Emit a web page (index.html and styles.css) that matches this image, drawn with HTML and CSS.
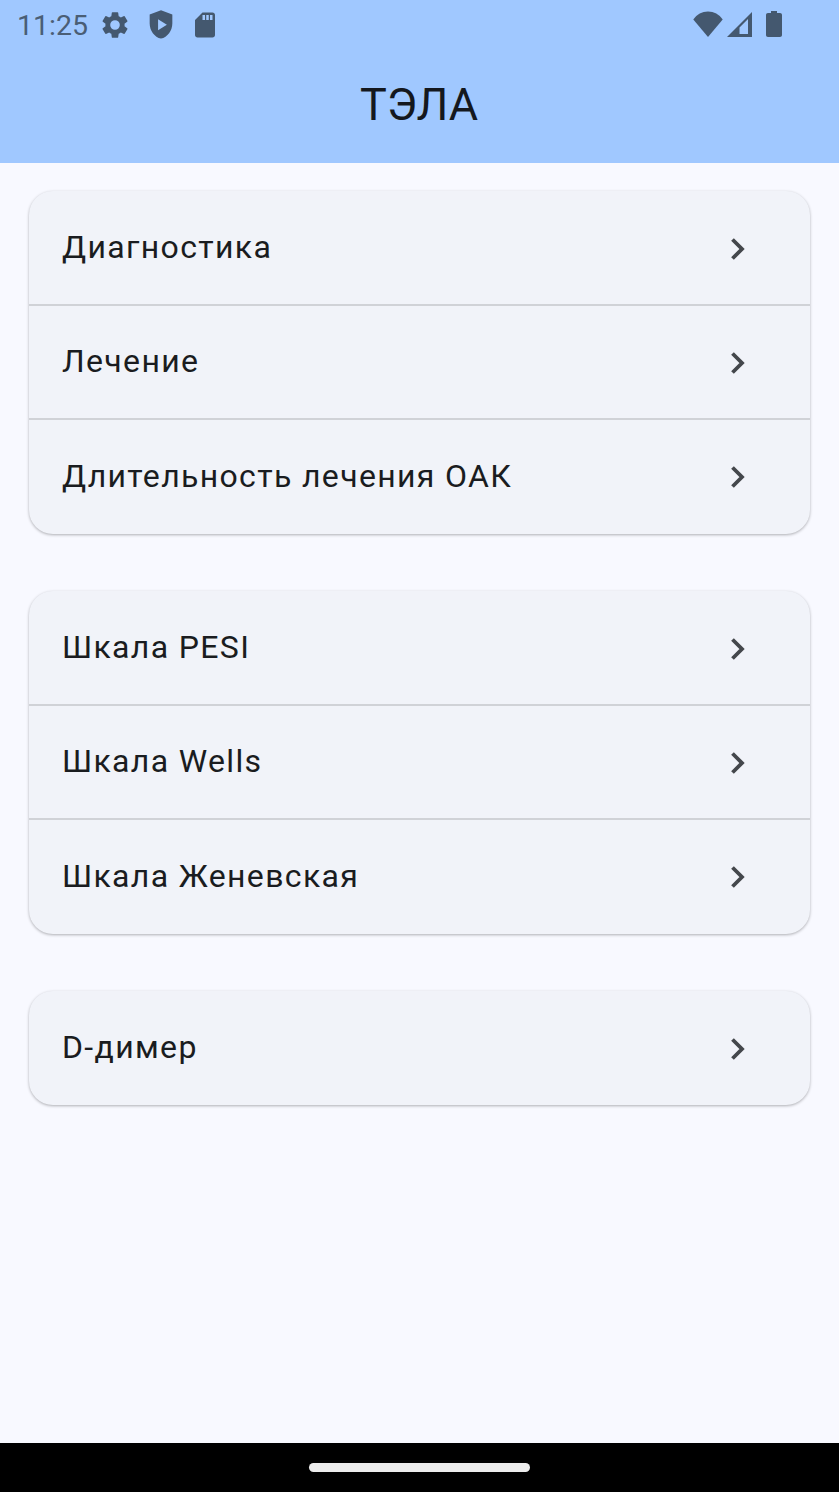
FILE: index.html
```html
<!DOCTYPE html>
<html lang="ru">
<head>
    <meta charset="UTF-8">
    <meta name="viewport" content="width=device-width, initial-scale=1.0">
    <title>ТЭЛА</title>
    <link rel="stylesheet" href="styles.css">
</head>
<body>
    <div class="app">
        <!-- Status bar and title -->
        <header class="top-bar">
            <div class="status-bar">
                <div class="status-left">
                    <span class="clock">11:25</span>
                    <svg class="gear" viewBox="0 0 24 24"><path d="M19.14 12.94c.04-.3.06-.61.06-.94s-.02-.64-.07-.94l2.03-1.58a.49.49 0 0 0 .12-.61l-1.92-3.32a.49.49 0 0 0-.59-.22l-2.39.96a7 7 0 0 0-1.62-.94l-.36-2.54a.48.48 0 0 0-.48-.41h-3.84a.48.48 0 0 0-.47.41l-.36 2.54a7.4 7.4 0 0 0-1.62.94l-2.39-.96a.48.48 0 0 0-.59.22L2.74 8.87a.48.48 0 0 0 .12.61l2.03 1.58c-.05.3-.09.63-.09.94s.02.64.07.94l-2.03 1.58a.49.49 0 0 0-.12.61l1.92 3.32c.12.22.37.29.59.22l2.39-.96c.5.38 1.03.7 1.62.94l.36 2.54c.05.24.24.41.48.41h3.84c.24 0 .44-.17.47-.41l.36-2.54a7 7 0 0 0 1.62-.94l2.39.96c.22.08.47 0 .59-.22l1.92-3.32a.48.48 0 0 0-.12-.61zM12 15.6a3.6 3.6 0 1 1 0-7.2 3.6 3.6 0 0 1 0 7.2z"/></svg>
                    <svg class="shield" viewBox="0 0 24 24"><path fill-rule="evenodd" d="M12 1 3.500 4.200v6.600c0 5.300 3.600 10.200 8.500 11.400 4.900-1.200 8.500-6.100 8.500-11.400V4.200zM9.800 7.600l6.600 4.200-6.600 4.200z"/></svg>
                    <svg class="sdcard" viewBox="0 0 24 24"><path fill-rule="evenodd" d="M18 2h-8L4 8v12c0 1.100.9 2 2 2h12c1.100 0 2-.9 2-2V4c0-1.100-.9-2-2-2zM12 8h-2V4h2zm3 0h-2V4h2zm3 0h-2V4h2z"/></svg>
                </div>
                <div class="status-right">
                    <svg class="wifi" viewBox="0 0 30 26"><path d="M15 26 .3 8.500C3.900 3.400 9 .5 15 .5s11.100 2.900 14.700 8z"/></svg>
                    <svg class="signal" viewBox="0 0 25 25"><path fill-rule="evenodd" d="M25 0v25H0zM21 7l-8.500 8.500V22H21z"/></svg>
                    <svg class="battery" viewBox="0 0 16 26"><path d="M5 0h6v2h3c1.200 0 2 .8 2 2v20c0 1.200-.8 2-2 2H2c-1.200 0-2-.8-2-2V4c0-1.200.8-2 2-2h3z"/></svg>
                </div>
            </div>
            <h1 class="title">ТЭЛА</h1>
        </header>

        <main class="content">
            <section class="card">
                <a class="row"><span>Диагностика</span><svg class="chevron" viewBox="0 0 16 24"><path d="M2.500 2.500 12 12l-9.500 9.500"/></svg></a>
                <a class="row"><span>Лечение</span><svg class="chevron" viewBox="0 0 16 24"><path d="M2.500 2.500 12 12l-9.500 9.500"/></svg></a>
                <a class="row"><span>Длительность лечения ОАК</span><svg class="chevron" viewBox="0 0 16 24"><path d="M2.500 2.500 12 12l-9.500 9.500"/></svg></a>
            </section>

            <section class="card">
                <a class="row"><span>Шкала PESI</span><svg class="chevron" viewBox="0 0 16 24"><path d="M2.500 2.500 12 12l-9.500 9.500"/></svg></a>
                <a class="row"><span>Шкала Wells</span><svg class="chevron" viewBox="0 0 16 24"><path d="M2.500 2.500 12 12l-9.500 9.500"/></svg></a>
                <a class="row"><span>Шкала Женевская</span><svg class="chevron" viewBox="0 0 16 24"><path d="M2.500 2.500 12 12l-9.500 9.500"/></svg></a>
            </section>

            <section class="card">
                <a class="row"><span>D-димер</span><svg class="chevron" viewBox="0 0 16 24"><path d="M2.500 2.500 12 12l-9.500 9.500"/></svg></a>
            </section>
        </main>

        <!-- Navigation bar -->
        <footer class="nav-bar">
            <div class="home-pill"></div>
        </footer>
    </div>
</body>
</html>
```

FILE: styles.css
```css
* {
    box-sizing: border-box;
}
body {
    margin: 0;
    font-family: Roboto, "Noto Sans", sans-serif;
    background-color: #f8f9ff;
}
.app {
    display: flex;
    flex-direction: column;
    height: 1492px;
}
.top-bar {
    height: 163px;
    background-color: #a0c8ff;
    padding: 8px 57px 0 17px;
}
.status-bar {
    display: flex;
    justify-content: space-between;
    align-items: center;
    height: 34px;
}
.status-left, .status-right {
    display: flex;
    align-items: center;
}
.status-bar svg {
    flex-shrink: 0;
    fill: #44586f;
}
.clock {
    font-size: 28.5px;
    width: 82px;
    color: #4a5e75;
}
.gear, .shield {
    width: 32px;
    height: 32px;
    margin-right: 13.5px;
}
.sdcard {
    width: 30px;
    height: 30px;
}
.status-right {
    margin-top: -2px;
}
.wifi {
    width: 30px;
    height: 26px;
    margin-right: 4px;
}
.signal {
    width: 25px;
    height: 25px;
    margin-right: 14px;
}
.battery {
    width: 16px;
    height: 26px;
}
.title {
    margin: 37px 0 0 39px;
    text-align: center;
    font-size: 45px;
    line-height: 52px;
    font-weight: 400;
    color: #14181e;
}
.content {
    flex: 1;
    padding: 28px 29px 0;
}
.card {
    background-color: #f1f3f9;
    border-radius: 24px;
    box-shadow: 0 1px 3px rgba(0, 0, 0, 0.3);
    margin-bottom: 57px;
    overflow: hidden;
}
.row {
    display: flex;
    justify-content: space-between;
    align-items: center;
    height: 114px;
    padding: 0 64px 0 33px;
    border-bottom: 2px solid #d0d2d7;
    font-size: 32px;
    letter-spacing: 1.35px;
    color: #1a1c20;
}
.row:first-child {
    height: 115px;
}
.row:last-child {
    height: 114px;
    border-bottom: none;
}
.row span {
    margin-bottom: 2px;
}
.chevron {
    width: 16px;
    height: 24px;
    margin-top: 2px;
    fill: none;
    stroke: #44474c;
    stroke-width: 3.8;
}
.row:last-child .chevron {
    margin-top: 0;
}
.row:only-child .chevron {
    margin-top: 2px;
}
.nav-bar {
    height: 49px;
    background-color: #000;
    display: flex;
    justify-content: center;
    padding-top: 20px;
}
.home-pill {
    width: 221px;
    height: 9px;
    border-radius: 5px;
    background-color: #ececec;
}
```
